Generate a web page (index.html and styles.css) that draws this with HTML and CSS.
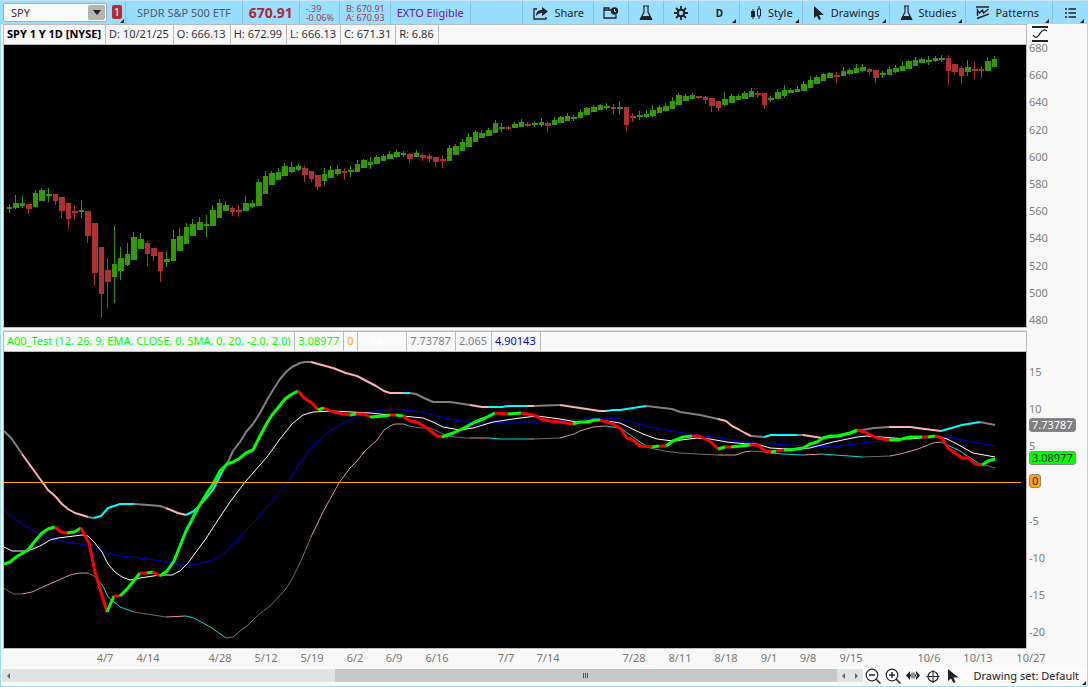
FILE: index.html
```
<!DOCTYPE html>
<html lang="en">
<head>
    <meta charset="UTF-8">
    <meta name="viewport" content="width=device-width, initial-scale=1.0">
    <title>SPY Chart</title>
    <link rel="stylesheet" href="styles.css">
</head>
<body>
    <header class="toolbar">
        <div class="symbol">
            <div class="symbol-box">
                <input type="text" value="SPY" aria-label="Symbol">
                <button class="drop" aria-label="Symbol list"><svg width="8" height="5" viewBox="0 0 8 5"><path d="M0 0h8L4 5z"/></svg></button>
            </div>
            <button class="link-color corner" aria-label="Link color 1"><span>1</span></button>
        </div>
        <div class="cell name">SPDR S&amp;P 500 ETF</div>
        <div class="cell last">670.91</div>
        <div class="cell pair"><span>-.39</span><span>-0.06%</span></div>
        <div class="cell pair"><span>B: 670.91</span><span>A: 670.93</span></div>
        <div class="cell exto">EXTO Eligible</div>
        <div class="spacer"></div>
        <button class="tool">
            <svg width="15" height="14" viewBox="0 0 15 14"><path d="M4 3H1v10h12v-2" fill="none" stroke="#222" stroke-width="1.3"/><path d="M3 10c0-4 2-6 6-6V1l6 4.500-6 4.500V7C6 7 4.500 8 3 10z"/></svg>
            Share
        </button>
        <button class="tool icon" aria-label="Calendar">
            <svg width="16" height="14" viewBox="0 0 16 14"><path d="M8 4H1v8h12V9M1 4V2h5v2" fill="none" stroke="#222" stroke-width="1.300"/><circle cx="11.500" cy="5" r="3.700"/><path d="M11.500 3v2.500H13" fill="none" stroke="#9df" stroke-width="1"/></svg>
        </button>
        <button class="tool icon" aria-label="Lab">
            <svg width="14" height="16" viewBox="0 0 14 16"><path d="M4 1h6M5 1v6L1.500 14h11L9 7V1" fill="none" stroke="#222" stroke-width="1.200"/><path d="M3.500 11h7l3 4H.5z"/></svg>
        </button>
        <button class="tool icon" aria-label="Settings">
            <svg width="14" height="14" viewBox="0 0 14 14"><path d="M7 0v14M0 7h14M2 2l10 10M12 2L2 12" stroke="#222" stroke-width="1.800"/><circle cx="7" cy="7" r="3.200" fill="#9df" stroke="#222" stroke-width="2"/></svg>
        </button>
        <button class="tool period corner">D</button>
        <button class="tool corner">
            <svg width="12" height="14" viewBox="0 0 12 14"><path d="M1 5h4v6H1zM2.500 3h1v10h-1z"/><path d="M7.500 3h3v7h-3zM9 0v3M9 10v3" fill="none" stroke="#222"/></svg>
            Style
        </button>
        <button class="tool corner">
            <svg width="12" height="14" viewBox="0 0 12 14"><path d="M1 0v12l3-2 2 4 2-1-2-4h5z"/></svg>
            Drawings
        </button>
        <button class="tool corner">
            <svg width="13" height="16" viewBox="0 0 13 16"><path d="M4 1h5M5 1v6L1.500 14h10L8 7V1" fill="none" stroke="#222" stroke-width="1.200"/><path d="M3.500 11h6l3 4H.5z"/></svg>
            Studies
        </button>
        <button class="tool patterns corner">
            <svg width="13" height="14" viewBox="0 0 13 14"><path d="M0 1h13M1 12.500L13 8M1.500 10V4l2 3 3-3 1 3 5-4" fill="none" stroke="#222" stroke-width="1.400"/></svg>
            Patterns
        </button>
        <button class="tool icon corner" aria-label="Menu">
            <svg width="11" height="10" viewBox="0 0 11 10"><path d="M0 1h2M3.500 1H11M0 5h2M3.500 5H11M0 9h2M3.500 9H11" stroke="#222" stroke-width="1.500"/></svg>
        </button>
    </header>

    <main class="workspace">
        <section class="charts">
            <div class="info">
                <b>SPY 1 Y 1D [NYSE]</b>
                <span>D: 10/21/25</span>
                <span>O: 666.13</span>
                <span>H: 672.99</span>
                <span>L: 666.13</span>
                <span>C: 671.31</span>
                <span>R: 6.86</span>
            </div>
            <svg class="plot price" id="price" viewBox="4 45 1022 282" preserveAspectRatio="none" role="img" aria-label="SPY daily candles"></svg>
            <div class="divider"></div>
            <div class="info study">
                <span class="lime">A00_Test (12, 26, 9, EMA, CLOSE, 0, SMA, 0, 20, -2.0, 2.0)</span>
                <span class="lime">3.08977</span>
                <span class="orange">0</span>
                <span class="white">3.54988</span>
                <span class="gray">7.73787</span>
                <span class="gray">2.065</span>
                <span class="blue">4.90143</span>
            </div>
            <svg class="plot macd" id="macd" viewBox="4 352 1022 296" preserveAspectRatio="none" role="img" aria-label="MACD with bands"></svg>
            <div class="dates" id="dates"></div>
        </section>
        <aside class="axis">
            <button class="fit" aria-label="Fit scale"><svg width="16" height="16" viewBox="0 0 16 16"><path d="M0 1h16M0 15h16" stroke="#222" stroke-width="2"/><path d="M1 9c2 3 4 3 6 0s4-7 8-4" fill="none" stroke="#222" stroke-width="1.300"/></svg></button>
            <div class="scale price-scale">
                <span>680</span><span>660</span><span>640</span><span>620</span><span>600</span><span>580</span><span>560</span><span>540</span><span>520</span><span>500</span><span>480</span>
            </div>
            <div class="scale macd-scale">
                <span>15</span><span>10</span><span>5</span><span>&nbsp;</span><span>-5</span><span>-10</span><span>-15</span><span>-20</span>
                <em class="tag band">7.73787</em>
                <em class="tag value">3.08977</em>
                <em class="tag zero">0</em>
            </div>
        </aside>
    </main>

    <footer class="bottom">
        <div class="scrollbar">
            <button aria-label="Scroll left"><svg width="3" height="6" viewBox="0 0 3 6"><path d="M3 0v6L0 3z"/></svg></button>
            <div class="track"><div class="thumb"><i></i><i></i><i></i></div></div>
            <button aria-label="Step left"><svg width="3" height="6" viewBox="0 0 3 6"><path d="M3 0v6L0 3z"/></svg></button>
            <button aria-label="Step right"><svg width="3" height="6" viewBox="0 0 3 6"><path d="M0 0v6l3-3z"/></svg></button>
        </div>
        <div class="actions">
            <button aria-label="Zoom out"><svg width="16" height="16" viewBox="0 0 16 16"><path d="M4 7h6M11 11l4.500 4.500" stroke="#222" stroke-width="1.500"/><circle cx="7" cy="7" r="5.800" fill="none" stroke="#222" stroke-width="1.200"/></svg></button>
            <button aria-label="Zoom in"><svg width="16" height="16" viewBox="0 0 16 16"><path d="M4 7h6M7 4v6M11 11l4.500 4.500" stroke="#222" stroke-width="1.500"/><circle cx="7" cy="7" r="5.800" fill="none" stroke="#222" stroke-width="1.200"/></svg></button>
            <button aria-label="Expand"><svg width="16" height="16" viewBox="0 0 16 16"><path d="M5 3v9L1 7.500zM11 3v9l4-4.500zM4 6.500h2v2H4zM10 6.500h2v2h-2zM6.500 4.500h1v6h-1zM8.500 4.500h1v6h-1z"/></svg></button>
            <button aria-label="Crosshair"><svg width="16" height="16" viewBox="0 0 16 16"><path d="M8 2v13M1.500 8.500h13" stroke="#222"/><circle cx="8" cy="8.500" r="5" fill="none" stroke="#222" stroke-width="1.200"/></svg></button>
            <button aria-label="Pointer"><svg width="16" height="16" viewBox="0 0 16 16"><path d="M3 1v12l3-2.500L8.500 15l2-1-2-4.500h5z"/></svg></button>
        </div>
        <button class="drawing-set corner">Drawing set: Default</button>
    </footer>

    <script src="chart.js"></script>
</body>
</html>
```
FILE: styles.css
```
* {
    box-sizing: border-box;
}

body {
    display: flex;
    flex-direction: column;
    height: 100vh;
    margin: 0;
    background-color: #f8f8f8;
    border-right: 1px solid #99ddff;
    border-bottom: 1px solid #99ddff;
    font-family: "Noto Sans", "Open Sans", sans-serif;
    font-size: 11px;
    line-height: 16px;
    color: #333;
    overflow: hidden;
}

button {
    padding: 0;
    border: 0;
    background: none;
    font: inherit;
    color: #222;
}

svg {
    display: block;
    fill: #222;
}

/* top toolbar */
.toolbar {
    display: flex;
    flex: none;
    height: 24px;
    background-color: #99ddff;
    border-top: 1px solid #c4e4f4;
    white-space: nowrap;
}

.symbol {
    display: flex;
    align-items: center;
    width: 125px;
    padding-left: 3px;
    gap: 5px;
}

.symbol-box {
    display: flex;
    width: 104px;
    height: 19px;
    padding: 1px;
    background-color: #fafafa;
    border: 1px solid #aaa;
    border-radius: 2px;
}

.symbol-box input {
    flex: 1;
    min-width: 0;
    padding: 0 6px;
    border: 0;
    background: none;
    font: inherit;
    color: #333;
}

.drop {
    display: flex;
    align-items: center;
    justify-content: center;
    width: 17px;
    background-color: #b4b4b4;
    border-radius: 2px;
}

.link-color {
    height: 18px;
    width: 12px;
}

.link-color span {
    display: block;
    width: 10px;
    height: 14px;
    margin-bottom: 2px;
    background-color: #b32d33;
    border-radius: 2px;
    line-height: 14px;
    color: #fff;
}

.corner {
    position: relative;
}

.corner::after {
    content: "";
    position: absolute;
    right: 3px;
    bottom: 1px;
    border-left: 4px solid transparent;
    border-bottom: 4px solid #222;
}

.link-color::after {
    right: 0;
    bottom: -1px;
}

.cell {
    display: flex;
    align-items: center;
    padding: 0 6px;
    border-left: 1px solid #84c2e0;
}

.name {
    padding: 0 11px;
    color: #4a5e6a;
}

.last {
    font-size: 14px;
    font-weight: bold;
    color: #b02a30;
}

.pair {
    flex-direction: column;
    align-items: flex-start;
    justify-content: center;
    padding-right: 5px;
    font-size: 9px;
    line-height: 9px;
    color: #a04050;
}

.exto {
    color: #7713a8;
}

.spacer {
    flex: 1;
    border-left: 1px solid #84c2e0;
}

.tool {
    display: flex;
    align-items: center;
    justify-content: center;
    gap: 6px;
    padding: 0 9px 0 10px;
    border-left: 1px solid #84c2e0;
}

.icon {
    width: 35px;
    padding: 0;
}

.period {
    width: 41px;
    font-weight: bold;
    font-size: 10px;
}

.patterns {
    padding-right: 13px;
}

/* charts */
.workspace {
    display: flex;
    flex: 1;
    min-height: 0;
    border-left: 1px solid #99ddff;
}

.charts {
    display: flex;
    flex: 1;
    flex-direction: column;
    min-width: 0;
    padding-left: 2px;
}

.info {
    display: flex;
    flex: none;
    height: 21px;
    border: 1px solid #bbb;
    white-space: nowrap;
    line-height: 18px;
}

.info > * {
    padding: 0 4px 0 3px;
    border-right: 1px solid #bbb;
}

.info b {
    color: #000;
}

.info .lime { color: #00ff00; }
.info .orange { color: #ffa500; }
.info .white { color: #fff; }
.info .gray { color: #808080; }
.info .blue { color: #0000ff; }

.plot {
    width: 100%;
    min-height: 0;
    background-color: #000;
    border-left: 1px solid #bbb;
    border-right: 1px solid #bbb;
}

.price {
    flex: 282 0 0;
}

.macd {
    flex: 296 0 0;
}

.divider {
    flex: none;
    height: 4px;
    border-top: 1px solid #bbb;
    border-bottom: 1px solid #ddd;
}

.dates {
    position: relative;
    flex: none;
    height: 19px;
    border-top: 1px solid #bbb;
    line-height: 18px;
    color: #777;
}

.dates span {
    position: absolute;
    top: 0;
    transform: translateX(-50%);
}

/* value axis */
.axis {
    display: flex;
    flex: none;
    flex-direction: column;
    width: 60px;
    padding-bottom: 27px;
    color: #808080;
}

.fit {
    height: 16px;
    padding: 2px 0 0 5px;
}

.scale {
    position: relative;
    display: flex;
    flex-direction: column;
    justify-content: space-between;
    padding-left: 2px;
}

.price-scale {
    flex: 288 0 0;
}

.macd-scale {
    flex: 276 0 0;
    margin-top: 36px;
}

.tag {
    position: absolute;
    left: 2px;
    height: 14px;
    padding: 0 2px;
    border: 1px solid #888;
    border-radius: 3px;
    line-height: 12px;
    font-style: normal;
    color: #222;
}

.band {
    top: 19.500%;
    background-color: #808080;
    color: #fff;
}

.value {
    top: 31.500%;
    background-color: #00ff00;
}

.zero {
    top: 40%;
    background-color: #ffa500;
}

/* scrollbar and chart tools */
.bottom {
    display: flex;
    flex: none;
    height: 19px;
    padding-left: 1px;
    background-color: #fcfcfc;
    border-left: 1px solid #99ddff;
    white-space: nowrap;
}

.scrollbar {
    display: flex;
    flex: 1;
    height: 13px;
    margin-top: 2px;
    background-color: #e2e2e2;
}

.scrollbar button {
    display: flex;
    align-items: center;
    justify-content: center;
    width: 13px;
}

.scrollbar svg {
    fill: #666;
}

.track {
    flex: 1;
}

.thumb {
    display: flex;
    align-items: center;
    justify-content: center;
    gap: 1px;
    width: 61%;
    height: 13px;
    margin-left: auto;
    background-color: #c8c8c8;
}

.thumb i {
    width: 1px;
    height: 5px;
    background-color: #555;
}

.actions {
    display: flex;
    align-items: flex-start;
    gap: 4px;
    padding: 1px 13px 0 2px;
}

.drawing-set {
    padding: 0 8px 1px 0;
    line-height: 18px;
}

.drawing-set::after {
    right: 1px;
}
```
FILE: chart.js
```
const UP = '#339900';
const DOWN = '#b03030';
const COLORS = { y: '#808080', p: '#ffb0b0', c: '#00ffff', g: '#00ff00', r: '#ff0000', b: '#0000dd', w: '#ffffff' };

// high, body top, body bottom, low, direction
const candles = `
204 207 209 213 u,195 203 208 209 u,196 203 206 208 u,204 204 209 214 d,190 193 207 207 u,188 190 201 201 u,188 194 196 202 u,
194 194 201 205 d,197 197 211 218 d,203 203 219 229 d,206 211 213 220 d,200 210 212 218 u,211 211 236 243 d,223 223 273 286 d,
247 247 294 318 d,258 270 282 308 d,226 264 277 303 u,247 258 271 280 u,243 254 265 266 u,232 237 260 260 u,233 239 249 249 u,
241 243 254 266 d,248 248 256 261 d,252 252 271 282 d,252 259 262 267 u,230 239 261 261 u,228 236 251 251 u,223 227 244 244 u,
219 224 236 236 u,217 222 230 230 u,215 224 226 237 u,205 210 226 226 u,199 203 218 218 u,201 205 211 211 u,206 208 212 216 d,
205 210 212 217 d,196 203 211 211 u,200 203 207 208 u,179 182 206 206 u,171 176 194 194 u,171 173 185 185 u,168 172 180 180 u,
163 166 176 176 u,162 167 172 173 u,164 166 170 171 u,166 168 175 182 d,171 171 179 182 d,175 175 187 190 d,168 174 181 186 u,
166 170 178 178 u,165 169 174 176 u,168 171 173 180 d,166 170 172 177 u,160 164 172 172 u,159 160 168 168 u,157 162 165 169 u,
155 157 164 164 u,154 156 161 161 u,151 154 159 159 u,149 152 157 158 u,151 153 155 157 u,153 154 159 163 d,150 153 157 157 u,
153 155 158 161 d,154 156 159 162 d,157 157 162 167 d,155 159 161 168 d,145 148 161 161 u,144 146 155 155 u,139 142 151 151 u,
133 137 147 147 u,130 132 142 142 u,130 133 138 138 u,128 130 136 136 u,120 123 133 133 u,123 127 129 132 u,126 127 129 130 d,
122 124 128 128 u,119 122 127 127 u,122 124 126 127 d,122 123 125 127 u,118 122 125 127 u,122 123 126 132 d,117 120 125 125 u,
116 117 123 123 u,113 116 121 121 u,115 117 119 121 u,109 112 118 118 u,107 108 115 115 u,105 107 112 112 u,104 105 110 110 u,
103 106 108 110 u,104 107 109 114 d,101 107 109 115 u,107 107 125 131 d,113 116 118 122 d,111 115 117 120 u,110 114 117 118 u,
105 110 116 117 u,105 107 113 113 u,103 106 111 111 u,97 101 109 109 u,93 95 105 105 u,94 96 101 101 u,93 95 99 99 u,
96 96 98 99 d,96 97 100 104 d,98 98 106 112 d,101 101 108 111 d,92 99 105 106 u,94 96 103 103 u,94 96 100 100 u,
91 93 99 99 u,88 91 97 97 u,91 93 95 98 d,93 93 105 109 d,96 98 100 102 u,89 92 99 99 u,85 90 96 98 u,
88 90 93 93 u,86 89 92 92 u,81 84 91 91 u,76 80 88 88 u,75 77 84 84 u,73 74 81 81 u,72 73 78 78 u,
72 75 77 83 d,67 71 76 76 u,68 70 74 75 u,64 68 73 73 u,64 67 71 72 u,68 69 72 75 d,70 70 78 83 d,
71 73 75 78 u,67 69 75 75 u,65 68 72 73 u,61 66 71 71 u,60 61 69 69 u,57 60 66 66 u,57 59 63 63 u,
56 60 62 65 u,56 58 61 62 u,55 58 60 62 u,55 58 71 85 d,64 64 72 75 d,66 68 76 84 d,60 67 72 76 u,
62 69 71 79 d,66 69 71 78 d,57 61 71 71 u,56 59 67 67 u`.trim().split(',');

// each run: colour key, then the points it adds after the end of the previous run
const lines = [
    { width: 1, runs: 'b 4,510 14,518 27,527 37,533 50,538 65,542 87,545 108,553 120,556 140,558 155,560 166,562 180,565 195,565 205,562 213,560 220,556 227,551 233,544 240,537 247,529 255,521 265,509 275,498 288,482 298,466 310,449 318,441 330,431 345,422 360,416 370,412 383,410 393,409 403,410 423,412 443,418 467,422 477,424 493,423 507,422 540,422 570,420 603,418 620,419 650,427 683,433 720,438 750,443 773,444 790,445 833,447 870,442 897,440 917,438 947,437 973,442 995,446' },
    { width: 1, opacity: 0.85, runs: 'y 4,588 8,591 14,594 22,594|p 32,592 45,586 70,575 80,573 88,573|y 94,576 98,580|c 103,586 108,597 120,607 134,612|y 166,617|p 186,616|c 194,618 212,628 226,638|y 233,637 240,631 247,626 257,616 270,606 285,590 292,579 300,563 311,537|p 324,510 339,483 350,468 357,461 364,452 377,440 384,430 390,426 395,424 403,424|c 409,426|y 420,428 430,428 437,431 447,436 465,438 470,438|p 488,438|c 500,439 527,439|p 534,439|y 560,438|p 574,434 580,431 593,427 606,426|c 620,428 626,432 640,442 650,448|y 664,451 680,453 698,454 718,455|p 736,455 744,452 751,451|y 764,452 771,453|c 783,454 803,455|p 822,454|c 835,455 863,457|y 890,456|p 900,454 918,449 933,443 941,442|c 960,451 978,463|y 982,464 995,468' },
    { width: 1, runs: 'w 4,547 12,551 24,551 33,549 42,545 50,540 58,538 82,535 88,536 94,542 102,552 108,564 115,572 122,577 130,580 140,578 160,575 172,575 180,571 188,563 196,552 205,540 218,520 230,502 245,482 253,473 267,457 280,439 292,424 303,415 313,412 333,411 370,413 390,415 403,416 423,418 433,422 443,427 460,430 473,428 493,422 520,418 537,416 560,419 577,422 600,420 620,423 643,434 657,439 673,441 697,438 710,439 727,442 747,444 757,444 770,448 790,449 810,448 833,442 857,437 867,436 893,438 910,439 937,436 947,439 957,444 973,453 995,457' },
    { width: 2, runs: 'y 4,431 12,439 22,454|p 35,472 43,483 48,490 55,496 62,504 68,509 75,513 88,517|y 94,518|c 101,516 108,508 120,504 134,504|y 148,505 160,506 166,508|p 178,513 186,515|c 194,511 200,505 208,496 214,488 222,472 227,464|y 233,451 240,442 246,432 253,424 260,413 267,400 273,390 280,379 287,371 292,367 300,363 305,362 311,362|p 322,365 333,368 346,373 357,376 376,386 384,391 390,393 403,393|c 410,393|y 416,394 424,398 433,402 450,402 470,405|p 482,407 488,407|c 502,407 508,406 527,406|p 534,406|y 560,405|p 580,408 600,411 606,411|c 613,410 620,410 646,406|y 655,407 672,409 680,412 700,415 718,419|p 726,421 732,426 738,429 745,433 751,436|y 764,437|c 771,435 797,435|y 803,435|p 816,437 822,438|c 840,436 857,431|y 874,428 889,427|p 910,427 925,429 941,431|c 962,425 980,422|y 995,425' },
    { width: 3, runs: 'g 4,564 10,562 16,557 28,550 35,541 42,533 48,529 55,527|r 61,532 67,533|g 74,532 81,528|r 89,543 95,572 107,612|g 114,596|r 120,596|g 128,588 140,573|r 147,573|g 153,572|r 160,576|g 167,571 174,561 186,531 198,508 207,493 213,484 220,471 227,464 233,462 240,458 246,453 253,450 260,436 267,423 272,415 277,409 285,399 292,394 298,391|r 304,398 312,403 318,410|g 324,408|r 333,412 350,415|g 356,414|r 364,414 370,417|g 384,416 390,415|r 396,415|g 403,416|r 410,421 417,422 427,428 437,436 442,437|g 453,433 462,429 475,422 485,418 495,413|r 508,414|g 521,413|r 534,415 541,419 550,421 560,422 573,424|g 580,422 588,422 594,420 600,420|r 613,424 620,428 627,438 633,440 640,446 652,447|g 659,446|r 666,446|g 673,441 683,437 692,436|r 699,436 707,440 712,443 718,449|g 725,447|r 731,447|g 750,445|r 758,445 765,451 771,452|g 776,451|r 784,450|g 790,450 803,448 810,444 817,442 823,438 830,436 837,436 850,433 857,430|r 865,432 877,438 889,440|g 898,440 910,437 922,437|r 928,437|g 935,436|r 942,438 948,448 955,453 962,458 969,458 975,464 982,465|g 988,461 995,459' }
];

const dates = { '4/7': 105, '4/14': 148, '4/28': 220, '5/12': 266, '5/19': 312, '6/2': 355, '6/9': 394, '6/16': 437, '7/7': 506, '7/14': 548, '7/28': 634, '8/11': 680, '8/18': 726, '9/1': 769, '9/8': 808, '9/15': 851, '10/6': 929, '10/13': 978, '10/27': 1031 };

function add(parent, tag, attrs) {
    const el = document.createElementNS('http://www.w3.org/2000/svg', tag);
    for (const key in attrs) el.setAttribute(key, attrs[key]);
    parent.appendChild(el);
}

const price = document.getElementById('price');
const step = 6.567;
candles.forEach((row, i) => {
    const [high, top, bottom, low, dir] = row.trim().split(' ');
    const fill = dir === 'u' ? UP : DOWN;
    const x = Math.round(6.6 + step * i);
    const next = Math.round(6.6 + step * (i + 1));
    add(price, 'rect', { x: x + 2, y: high, width: 1, height: low - high, fill });
    add(price, 'rect', { x, y: top, width: next - x - 1, height: bottom - top, fill });
});

const macd = document.getElementById('macd');
lines.forEach(line => {
    let last = '';
    line.runs.split('|').forEach(run => {
        const [color, ...points] = run.split(' ');
        if (last) points.unshift(last);
        last = points[points.length - 1];
        add(macd, 'polyline', {
            points: points.join(' '),
            fill: 'none',
            stroke: COLORS[color],
            'stroke-width': line.width,
            'stroke-opacity': line.opacity || 1,
            'stroke-linejoin': 'round'
        });
    });
});
add(macd, 'rect', { x: 4, y: 482, width: 1017, height: 1, fill: '#ffa500' });

const axis = document.getElementById('dates');
for (const label in dates) {
    const span = document.createElement('span');
    span.textContent = label;
    span.style.left = (dates[label] - 3) / 1024 * 100 + '%';
    axis.appendChild(span);
}
```
